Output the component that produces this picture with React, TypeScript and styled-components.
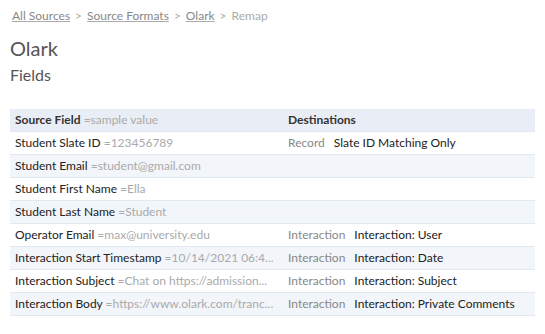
import * as React from 'react';
import styled, { createGlobalStyle } from 'styled-components';

const GlobalStyle = createGlobalStyle`
  body {
    margin: 0;
    background: #fff;
    font-family: Lato, 'Liberation Sans', sans-serif;
    font-size: 12px;
    color: #222;
  }
`;

const Page = styled.div`
  padding: 8px 10px 10px;
`;

const Crumbs = styled.nav`
  display: flex;
  gap: 5px;
  padding-left: 2px;
  line-height: 16px;
  color: #aaa;
`;

const CrumbLink = styled.a`
  color: #888;
  text-decoration: underline;
  text-decoration-color: #aaa;
`;

const Title = styled.h1`
  margin: 12px 0 0;
  font-size: 20px;
  line-height: 24px;
  font-weight: 400;
  color: #555;
`;

const Subtitle = styled.h2`
  margin: 5px 0 0;
  font-size: 16px;
  line-height: 20px;
  font-weight: 400;
  color: #555;
`;

const Table = styled.div`
  margin-top: 24px;
  display: grid;
  grid-template-columns: 273px 1fr;
`;

const Row = styled.div<{ $shade?: 'head' | 'alt' | 'plain' }>`
  display: contents;
  & > div {
    background: ${(p) =>
      p.$shade === 'head' ? '#e9eef6' : p.$shade === 'alt' ? '#f2f5fa' : '#fff'};
    border-bottom: 1px solid #e1e8f2;
  }
`;

const Cell = styled.div`
  height: 22px;
  line-height: 22px;
  padding: 0 5px;
  white-space: nowrap;
  overflow: hidden;
`;

const HeadLabel = styled.span`
  font-weight: 700;
  color: #333;
`;

const Sample = styled.span`
  color: #aaa;
`;

const DestType = styled.span`
  color: #888;
  margin-right: 9px;
`;

type Field = { name: string; sample: string; destType?: string; dest?: string };

const fields: Field[] = [
  { name: 'Student Slate ID', sample: '123456789', destType: 'Record', dest: 'Slate ID Matching Only' },
  { name: 'Student Email', sample: 'student@gmail.com' },
  { name: 'Student First Name', sample: 'Ella' },
  { name: 'Student Last Name', sample: 'Student' },
  { name: 'Operator Email', sample: 'max@university.edu', destType: 'Interaction', dest: 'Interaction: User' },
  { name: 'Interaction Start Timestamp', sample: '10/14/2021 06:4...', destType: 'Interaction', dest: 'Interaction: Date' },
  { name: 'Interaction Subject', sample: 'Chat on https://admission...', destType: 'Interaction', dest: 'Interaction: Subject' },
  { name: 'Interaction Body', sample: 'https://www.olark.com/tranc...', destType: 'Interaction', dest: 'Interaction: Private Comments' },
];

export default function App() {
  return (
    <Page>
      <GlobalStyle />
      <Crumbs>
        <CrumbLink>All Sources</CrumbLink>
        <span>&gt;</span>
        <CrumbLink>Source Formats</CrumbLink>
        <span>&gt;</span>
        <CrumbLink>Olark</CrumbLink>
        <span>&gt;</span>
        <span>Remap</span>
      </Crumbs>
      <Title>Olark</Title>
      <Subtitle>Fields</Subtitle>
      <Table>
        <Row $shade="head">
          <Cell>
            <HeadLabel>Source Field</HeadLabel> <Sample>=sample value</Sample>
          </Cell>
          <Cell>
            <HeadLabel>Destinations</HeadLabel>
          </Cell>
        </Row>
        {fields.map((f, i) => (
          <Row key={f.name} $shade={i % 2 === 1 ? 'alt' : 'plain'}>
            <Cell>
              {f.name} <Sample>={f.sample}</Sample>
            </Cell>
            <Cell>
              {f.destType && <DestType>{f.destType}</DestType>}
              {f.dest}
            </Cell>
          </Row>
        ))}
      </Table>
    </Page>
  );
}
